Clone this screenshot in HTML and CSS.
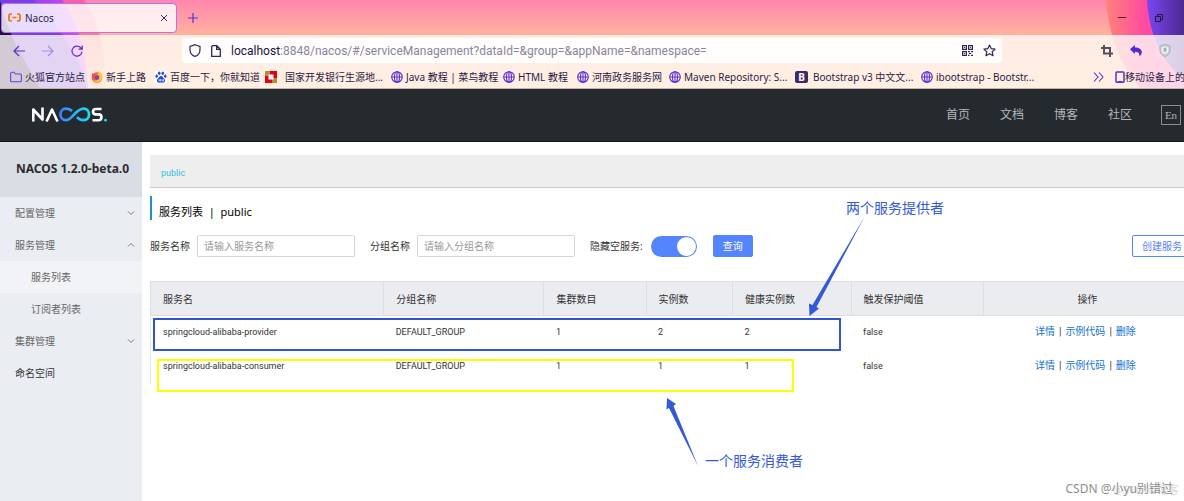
FILE: index.html
```html
<!DOCTYPE html>
<html lang="zh-CN">
<head>
<meta charset="utf-8">
<title>Nacos</title>
<link rel="stylesheet" href="styles.css">
</head>
<body>
<svg class="defs" aria-hidden="true">
  <symbol id="globe" viewBox="0 0 12 12"><g fill="none" stroke="#5b2fd0" stroke-width="1.1"><circle cx="6" cy="6" r="5.3"/><ellipse cx="6" cy="6" rx="2.5" ry="5.3"/><path d="M.7 6h10.6M6 .7v10.6"/></g></symbol>
  <symbol id="down" viewBox="0 0 8 8"><path d="M1 2.500l3 3 3-3" fill="none" stroke="#777" stroke-width="1"/></symbol>
  <symbol id="up" viewBox="0 0 8 8"><path d="M1 5.500l3-3 3 3" fill="none" stroke="#777" stroke-width="1"/></symbol>
</svg>

<div class="browser">
  <svg class="theme theme-left" viewBox="0 0 120 88" aria-hidden="true">
    <defs>
      <linearGradient id="tl" x1="0" x2="1" y1="0" y2="0"><stop offset="0" stop-color="#6a35d8"/><stop offset=".5" stop-color="#a646ea"/><stop offset="1" stop-color="#d650f0"/></linearGradient>
      <linearGradient id="tm" x1="0" x2="0" y1="0" y2="1"><stop offset="0" stop-color="#ff4f9e"/><stop offset=".4" stop-color="#ff6a86"/><stop offset="1" stop-color="#ffb080"/></linearGradient>
    </defs>
    <path d="M0 0h84c14 20 22 50 22 88H0z" fill="url(#tm)" opacity=".75"/>
    <path d="M0 0h62c14 18 24 50 26 88H0z" fill="url(#tl)"/>
    <path d="M0 0h34c18 24 48 50 52 88H0z" fill="#7a3fe6"/>
    <path d="M0 0c6 32 26 62 40 88H0z" fill="#21104a"/>
  </svg>
  <svg class="theme theme-right" viewBox="0 0 94 88" aria-hidden="true">
    <defs>
      <linearGradient id="tr" x1="0" x2="1" y1="0" y2="0"><stop offset="0" stop-color="#ff8378"/><stop offset=".5" stop-color="#ff4aa2"/><stop offset="1" stop-color="#ff4ab0"/></linearGradient>
      <linearGradient id="tp" x1="0" x2="1" y1="0" y2="0"><stop offset="0" stop-color="#7c45f0"/><stop offset="1" stop-color="#4c2a92"/></linearGradient>
    </defs>
    <path d="M16 0c3 34 12 62 34 88h44V0z" fill="url(#tr)"/>
    <path d="M57 0c2 34 14 60 37 80V0z" fill="url(#tp)"/>
  </svg>

  <div class="tabstrip">
    <div class="tab">
      <svg width="13" height="9" viewBox="0 0 13 9"><path d="M4 1H2.500Q1 1 1 2.500v4Q1 8 2.500 8H4M9 1h1.500Q12 1 12 2.500v4Q12 8 10.500 8H9M4.500 4.500h4" fill="none" stroke="#ff6a00" stroke-width="1.700"/></svg>
      <span class="tab-title">Nacos</span>
      <button class="plain" aria-label="关闭标签页"><svg width="8" height="8" viewBox="0 0 8 8"><path d="M1 1l6 6M7 1L1 7" stroke="#3a2850" stroke-width="1"/></svg></button>
    </div>
    <button class="plain" aria-label="新建标签页"><svg width="10" height="10" viewBox="0 0 10 10"><path d="M5 0v10M0 5h10" stroke="#5b2fd0" stroke-width="1.200"/></svg></button>
    <div class="window-buttons">
      <button class="plain" aria-label="最小化"><svg width="8" height="8" viewBox="0 0 8 8"><path d="M0 3.500h8" stroke="#4a1838"/></svg></button>
      <button class="plain" aria-label="还原"><svg width="8" height="8" viewBox="0 0 8 8"><path d="M.5 2.500h5v5h-5zM2.500 2.500v-2h5v5h-2" fill="none" stroke="#2a1440"/></svg></button>
    </div>
  </div>

  <div class="toolbar">
    <div class="nav-buttons">
      <button class="plain" aria-label="后退"><svg width="12" height="12" viewBox="0 0 12 12"><path d="M12 6H1M6 1L1 6l5 5" fill="none" stroke="#5b2fd0" stroke-width="1.200"/></svg></button>
      <button class="plain faded" aria-label="前进"><svg width="12" height="12" viewBox="0 0 12 12"><path d="M0 6h11M6 1l5 5-5 5" fill="none" stroke="#5b2fd0" stroke-width="1.200"/></svg></button>
      <button class="plain" aria-label="刷新"><svg width="12" height="12" viewBox="0 0 12 12"><path d="M11 6.500A5 5 0 1 1 9.500 2.500L11 4M11.300.5V4.200H7.500" fill="none" stroke="#5b2fd0" stroke-width="1.200"/></svg></button>
    </div>
    <div class="urlbar">
      <svg width="12" height="13" viewBox="0 0 12 13"><path d="M6 .7L11 2.500v3C11 9 9 11.500 6 12.400 3 11.500 1 9 1 5.500v-3z" fill="none" stroke="#332650" stroke-width="1.200"/></svg>
      <svg width="10" height="12" viewBox="0 0 10 12"><path d="M1.500.7h4.300l3.500 3.500v7.100H.7V1.500zM5.700.7v3.600h3.600" fill="none" stroke="#332650" stroke-width="1.300"/></svg>
      <div class="url"><b>localhost</b>:8848/nacos/#/serviceManagement?dataId=&amp;group=&amp;appName=&amp;namespace=</div>
      <svg width="11" height="11" viewBox="0 0 11 11"><path d="M.6.6h3.800v3.800H.6zM6.600.6h3.800v3.800H6.600zM.6 6.600h3.800v3.800H.6zM2 2.500h1M8 2.500h1M2 8.500h1M6 6.600h2M9 6.600h2M7 8.500h2M6 10.400h1.500M9 10.400h2" fill="none" stroke="#332650" stroke-width="1.200"/></svg>
      <svg width="13" height="13" viewBox="0 0 13 13"><path d="M6.500 1l1.700 3.600 3.900.5-2.900 2.700.8 3.900-3.500-2-3.500 2 .8-3.900L.9 5.100l3.900-.5z" fill="none" stroke="#332650" stroke-width="1.200" stroke-linejoin="round"/></svg>
    </div>
    <div class="extensions">
      <svg width="12" height="12" viewBox="0 0 12 12"><path d="M3 0v8.500h9M0 3h9v9" fill="none" stroke="#55505c" stroke-width="2"/></svg>
      <svg width="12" height="12" viewBox="0 0 11 11"><path d="M0 4L4.500 0v2.200c4 0 6.800 2 6.300 5-.2 1.500-1.300 2.500-2.300 3.300.5-3-1-4.200-4-4.200v2z" fill="#5128d2"/></svg>
      <svg width="12" height="13" viewBox="0 0 12 13"><path d="M6 .5l5 1.500v4c0 3-2 5.500-5 6.500C3 11.500 1 9 1 6V2z" fill="#c9d3da" stroke="#a4b0ba"/><circle cx="6" cy="6" r="3" fill="none" stroke="#fff"/><path d="M6 3.500v4" stroke="#7d8b96"/></svg>
    </div>
  </div>

  <nav class="bookmarks">
    <a href="#"><svg width="12" height="12" viewBox="0 0 12 12"><path d="M.6 10V2.500Q.6 1.200 2 1.200h2L5.500 3H10q1.400 0 1.400 1.400V9.500q0 1.300-1.400 1.300H2Q.6 10.800.6 10z" fill="none" stroke="#6a40dc" stroke-width="1.100"/></svg>火狐官方站点</a>
    <a href="#"><svg width="12" height="12" viewBox="0 0 12 12"><circle cx="6" cy="6.500" r="5.300" fill="#ff5b2e"/><path d="M7 0c4 2 5 5 4 8-2 4-7 4-9 1 3 1 6 0 6-3 0-1-1-2-2-2 1-1 1-3 1-4z" fill="#ffc52e"/><circle cx="6" cy="6.500" r="2.300" fill="#7a3fe0"/><path d="M1 2l2 2-2 3z" fill="#ff3c5a"/></svg>新手上路</a>
    <a href="#"><svg width="12" height="12" viewBox="0 0 12 12"><rect width="12" height="12" fill="#fff"/><g fill="#2448e0"><ellipse cx="4.200" cy="2.200" rx="1.300" ry="1.800"/><ellipse cx="7.800" cy="2.200" rx="1.300" ry="1.800"/><ellipse cx="1.700" cy="5.200" rx="1.200" ry="1.600"/><ellipse cx="10.300" cy="5.200" rx="1.200" ry="1.600"/><path d="M6 5c1.500 0 2 1.500 3 2.500 2 1.500 1 4.500-1.500 4.200-1-.2-2-.2-3 0C2 12 1 9 3 7.500 4 6.500 4.500 5 6 5z"/></g><path d="M4 8v2h1.500V8M7 8v2h1.500V8" fill="none" stroke="#fff" stroke-width=".7"/></svg>百度一下，你就知道</a>
    <a href="#" class="wide-gap"><svg width="12" height="12" viewBox="0 0 12 12"><path d="M0 0h12v12H0z" fill="#e60012"/><path d="M0 0h5v5H0zM7 7h5v5H7z" fill="#b98a3e"/><rect x="3.500" y="3.500" width="5" height="5" fill="#fff"/></svg>国家开发银行生源地...</a>
    <a href="#"><svg width="12" height="12"><use href="#globe"/></svg>Java 教程 | 菜鸟教程</a>
    <a href="#"><svg width="12" height="12"><use href="#globe"/></svg>HTML 教程</a>
    <a href="#"><svg width="12" height="12"><use href="#globe"/></svg>河南政务服务网</a>
    <a href="#"><svg width="12" height="12"><use href="#globe"/></svg>Maven Repository: S...</a>
    <a href="#"><span class="bootstrap">B</span>Bootstrap v3 中文文...</a>
    <a href="#"><svg width="12" height="12"><use href="#globe"/></svg>ibootstrap - Bootstr...</a>
    <button class="plain" aria-label="更多书签"><svg width="11" height="10" viewBox="0 0 11 10"><path d="M1 .5L5 5 1 9.500M6 .5L10 5 6 9.500" fill="none" stroke="#5b2fd0" stroke-width="1.100"/></svg></button>
    <a href="#" class="tight"><svg width="10" height="12" viewBox="0 0 10 12"><rect x="1" y="1" width="8" height="10.300" rx="1" fill="none" stroke="#5b2fd0" stroke-width="1.500"/><path d="M3 10.500h4" stroke="#5b2fd0"/></svg>移动设备上的</a>
  </nav>
</div>

<header class="site-header">
  <svg class="logo" width="76" height="18" viewBox="0 0 76 18" role="img" aria-label="NACOS">
    <defs><linearGradient id="lg" x1="0" x2="1"><stop offset="0" stop-color="#3f7dff"/><stop offset="1" stop-color="#13e2f4"/></linearGradient></defs>
    <g fill="none" stroke="#fff" stroke-width="2.600" stroke-linejoin="round"><path d="M2.300 15.500V3.500L11.500 13.500V1.500"/><path d="M15.500 15.500L21 3.500 26.500 15.500"/><path d="M70.500 3H65q-3 0-3 2.700t3 2.700h2.500q3 0 3 2.900t-3 2.900H61.500"/></g>
    <path d="M41 5C39 3 37 2.700 35 2.700 31.500 2.700 29.500 5.200 29.500 8.500s2 5.700 5.500 5.700C41.500 14.200 44.500 2.700 52.500 2.700 56 2.700 58 5.200 58 8.500S56 14.200 52.500 14.200C49.500 14.200 47.500 12.700 46 11.200" fill="none" stroke="url(#lg)" stroke-width="2.700"/>
    <circle cx="74.500" cy="14.200" r="1.400" fill="#13e2f4"/>
  </svg>
  <nav class="site-nav">
    <a href="#">首页</a><a href="#">文档</a><a href="#">博客</a><a href="#">社区</a>
  </nav>
  <button class="lang">En</button>
</header>

<div class="layout">
  <aside class="sidebar">
    <h1>NACOS 1.2.0-beta.0</h1>
    <ul>
      <li><a href="#">配置管理<svg width="8" height="8"><use href="#down"/></svg></a></li>
      <li><a href="#">服务管理<svg width="8" height="8"><use href="#up"/></svg></a></li>
      <li class="sub active"><a href="#">服务列表</a></li>
      <li class="sub"><a href="#">订阅者列表</a></li>
      <li><a href="#">集群管理<svg width="8" height="8"><use href="#down"/></svg></a></li>
      <li class="top"><a href="#">命名空间</a></li>
    </ul>
  </aside>

  <main class="content">
    <div class="namespace"><a href="#">public</a></div>
    <h2>服务列表&nbsp; |&nbsp; public</h2>
    <form class="filters">
      <label for="service">服务名称</label>
      <input id="service" type="text" placeholder="请输入服务名称">
      <label for="group">分组名称</label>
      <input id="group" type="text" placeholder="请输入分组名称">
      <label for="hide">隐藏空服务:</label>
      <input id="hide" class="switch" type="checkbox" checked>
      <button type="button" class="primary">查询</button>
      <button type="button" class="create">创建服务</button>
    </form>
    <table>
      <colgroup><col class="c-name"><col class="c-group"><col class="c-cluster"><col class="c-inst"><col class="c-health"><col class="c-limit"><col></colgroup>
      <thead><tr><th>服务名</th><th>分组名称</th><th>集群数目</th><th>实例数</th><th>健康实例数</th><th>触发保护阈值</th><th class="ops">操作</th></tr></thead>
      <tbody>
        <tr><td>springcloud-alibaba-provider</td><td>DEFAULT_GROUP</td><td>1</td><td>2</td><td>2</td><td>false</td><td class="ops"><a href="#">详情</a><i>|</i><a href="#">示例代码</a><i>|</i><a href="#">删除</a></td></tr>
        <tr><td>springcloud-alibaba-consumer</td><td>DEFAULT_GROUP</td><td>1</td><td>1</td><td>1</td><td>false</td><td class="ops"><a href="#">详情</a><i>|</i><a href="#">示例代码</a><i>|</i><a href="#">删除</a></td></tr>
      </tbody>
    </table>

    <div class="mark mark-blue"></div>
    <div class="mark mark-yellow"></div>
    <svg class="arrow arrow-provider" width="58" height="102" viewBox="0 0 58 102" aria-hidden="true"><path d="M57 1L8.500 92l2.500 1.500L1.500 101 1 88.500 4.500 90z" fill="#3459d8"/></svg>
    <svg class="arrow arrow-consumer" width="34" height="70" viewBox="0 0 34 70" aria-hidden="true"><path d="M32 69L3 11 .5 12.500 1 1l9 6-2.500 2z" fill="#3459d8"/></svg>
    <p class="note note-provider">两个服务提供者</p>
    <p class="note note-consumer">一个服务消费者</p>
  </main>
</div>
<p class="watermark watermark-back">@51CTO博客</p>
<p class="watermark">CSDN @小yu别错过</p>
</body>
</html>
```

FILE: styles.css
```css
* { box-sizing: border-box; }
body {
  margin: 0;
  min-height: 100vh;
  display: flex;
  flex-direction: column;
  position: relative;
  overflow: hidden;
  background: #fff;
  color: #333;
  font: 10px/16px "Noto Sans", "Noto Sans CJK SC", sans-serif;
}
a { color: inherit; text-decoration: none; }
p, h1, h2, ul { margin: 0; padding: 0; }
svg { flex: none; display: block; }
.defs { position: absolute; width: 0; height: 0; }
.plain { border: 0; padding: 0; background: none; display: flex; flex: none; }
.faded { opacity: .45; }

/* browser window */
.browser {
  position: relative;
  background: linear-gradient(#ff86ae, #ffb29d 35px, #ffc78f);
  color: #2b1b45;
  border-bottom: 1px solid #c9b3a8;
}
.theme { position: absolute; top: 0; width: auto; height: 100%; }
.theme-left { left: 0; }
.theme-right { right: 0; }
.tabstrip, .toolbar, .bookmarks { position: relative; display: flex; align-items: center; }
.tabstrip { height: 35px; padding: 0 21px 0 1px; gap: 11px; }
.tab {
  display: flex;
  align-items: center;
  gap: 4px;
  width: 176px;
  height: 30px;
  padding: 0 8px 0 6px;
  border: 1px solid #b573ec;
  border-radius: 4px;
  background: rgba(255, 255, 255, .82);
}
.tab-title { flex: 1; }
.window-buttons { display: flex; gap: 29px; margin-left: auto; }
.toolbar {
  height: 31px;
  padding: 3px 13px 3px 13px;
  background: rgba(255, 250, 247, .8);
}
.nav-buttons { display: flex; gap: 17px; width: 169px; }
.urlbar {
  display: flex;
  align-items: center;
  gap: 10px;
  flex: 0 1 820px;
  height: 25px;
  padding: 0 6px 0 7px;
  border-radius: 4px;
  background: rgba(255, 255, 255, .9);
}
.url { flex: 1; font-family: Roboto, sans-serif; font-size: 12px; color: #8b8499; white-space: nowrap; overflow: hidden; }
.url b { font-weight: normal; color: #20123a; }
.extensions { display: flex; align-items: center; gap: 17px; margin-left: auto; }
.bookmarks {
  display: grid;
  grid-template-columns: 81px 64px 110px 126px 112px 74px 92px 126px 126px 1fr 22px 69px;
  height: 22px;
  padding-left: 10px;
  background: rgba(255, 250, 247, .8);
  white-space: nowrap;
}
.bookmarks a { display: flex; align-items: center; gap: 3px; }
.bookmarks .wide-gap { gap: 8px; }
.bookmarks .tight { gap: 0; }
.bootstrap {
  width: 13px;
  margin-right: 2px;
  border-radius: 2px;
  background: #3f2a68;
  color: #fff;
  font-weight: bold;
  line-height: 12px;
  text-align: center;
}

/* console header */
.site-header {
  display: flex;
  align-items: center;
  height: 53px;
  padding: 0 3px 0 31px;
  background: #252a2f;
  border-bottom: 1px solid #14171a;
}
.site-nav { display: flex; gap: 30px; margin-left: auto; margin-right: 29px; color: #b4b7ba; font-size: 12px; }
.lang {
  width: 20px;
  height: 20px;
  padding: 0;
  border: 1px solid #8b8f92;
  background: none;
  color: #b4b7ba;
  font: 11px/16px "Liberation Serif", serif;
}

/* layout */
.layout { display: flex; flex: 1; }
.sidebar { flex: 0 0 142px; background: #eaedf1; color: #666; }
.sidebar h1 {
  height: 55px;
  padding-left: 16px;
  background: #d9dee4;
  color: #2b2b2b;
  font-size: 12px;
  line-height: 54px;
  white-space: nowrap;
}
.sidebar ul { list-style: none; }
.sidebar a {
  display: flex;
  align-items: center;
  justify-content: space-between;
  height: 32px;
  padding: 0 7px 0 15px;
}
.sidebar .sub a { padding-left: 31px; }
.sidebar .active { background: #f2f3f7; }
.sidebar .top { color: #333; }

.content { position: relative; flex: 1; padding: 13px 0 0 8px; margin-right: -8px; min-width: 0; }
.namespace {
  height: 33px;
  padding-left: 11px;
  background: #eee;
  border-bottom: 1px solid #ccc;
  color: #2fc3dc;
  font-family: Roboto, sans-serif;
  font-size: 9px;
  line-height: 36px;
}
.content h2 {
  height: 24px;
  margin-top: 8px;
  padding-left: 7px;
  border-left: 2px solid #1c93c4;
  color: #000;
  font-size: 11px;
  font-weight: normal;
  line-height: 31px;
}
.filters { display: flex; align-items: center; height: 22px; margin-top: 15px; }
.filters label { flex: none; margin-right: 7px; }
.filters input[type="text"] {
  width: 158px;
  height: 22px;
  margin-right: 15px;
  padding: 0 6px;
  border: 1px solid #d4d6de;
  border-radius: 2px;
  background: #fff;
  font: inherit;
}
.filters input::placeholder { color: #999; }
.filters .switch {
  appearance: none;
  flex: none;
  display: flex;
  justify-content: flex-end;
  width: 46px;
  height: 21px;
  margin: 0 16px 0 1px;
  padding: 1px;
  border-radius: 11px;
  background: #5584ff;
}
.switch::before { content: ""; width: 19px; border-radius: 50%; background: #fff; }
.primary, .create { height: 22px; padding: 0 9px; border: 1px solid #5584ff; border-radius: 2px; font: inherit; }
.primary { background: #5584ff; color: #fff; }
.create { margin-left: auto; background: #fff; color: #5584ff; }

table { width: 100%; margin-top: 24px; table-layout: fixed; border-collapse: collapse; }
.c-name { width: 22.4%; }
.c-group { width: 15.4%; }
.c-cluster { width: 9.8%; }
.c-inst { width: 8.3%; }
.c-health { width: 11.4%; }
.c-limit { width: 12.7%; }
th {
  height: 34px;
  padding: 0 12px;
  border: 1px solid #dcdee3;
  background: #ebecf0;
  font-weight: normal;
  text-align: left;
}
td {
  height: 34px;
  padding: 0 12px 2px;
  font-family: Roboto, "Noto Sans CJK SC", sans-serif;
  font-size: 9px;
}
td:first-child { border-left: 1px solid #e6e7eb; }
.ops { text-align: center; }
td.ops { font-size: 10px; padding-right: 16px; }
td.ops a { color: #1272cf; }
td.ops i { margin: 0 4px; font-style: normal; }

/* annotations */
.mark { position: absolute; }
.mark-blue { left: 11px; top: 176px; width: 688px; height: 33px; border: 2px solid #3055d4; }
.mark-yellow { left: 15px; top: 217px; width: 637px; height: 33px; border: 2px solid #ff0; }
.arrow { position: absolute; }
.arrow-provider { left: 666px; top: 73px; }
.arrow-consumer { left: 524px; top: 255px; }
.note { position: absolute; color: #3459d8; font-size: 14px; line-height: 20px; }
.note-provider { left: 704px; top: 56px; }
.note-consumer { left: 563px; top: 309px; }
.watermark { position: absolute; right: 11px; bottom: 4px; color: #8d8d8d; font-size: 12px; }
.watermark-back { right: 5px; bottom: 3px; color: #dcdcdc; font-size: 11px; }
```
